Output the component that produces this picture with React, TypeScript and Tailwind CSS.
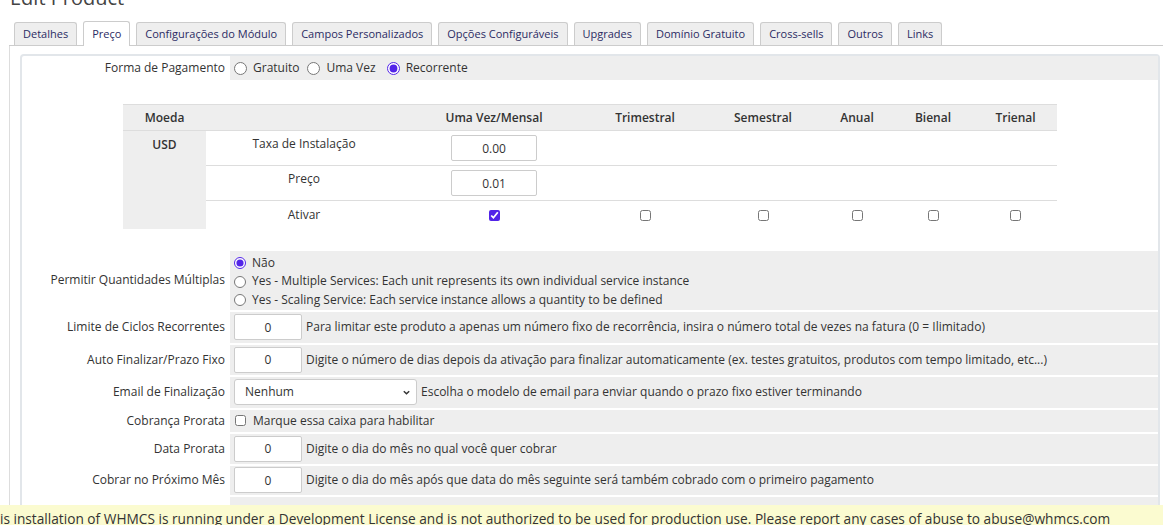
const tabs = [
  "Detalhes",
  "Preço",
  "Configurações do Módulo",
  "Campos Personalizados",
  "Opções Configuráveis",
  "Upgrades",
  "Domínio Gratuito",
  "Cross-sells",
  "Outros",
  "Links",
];

const cycles = ["Trimestral", "Semestral", "Anual", "Bienal", "Trienal"];

function NumInput({ value, w = "w-[68px]" }: { value: string; w?: string }) {
  return (
    <input
      readOnly
      value={value}
      className={`${w} h-[26px] rounded-[2px] border border-[#ccc] bg-white text-center text-[12px] text-[#333] outline-none`}
    />
  );
}

function Row({ label, h, children, top }: { label: string; h: string; children: React.ReactNode; top?: boolean }) {
  return (
    <div className={`grid grid-cols-[206px_1fr] gap-x-[2px] ${h}`}>
      <div className="flex items-center justify-end pr-[3px] text-[#333]">{label}</div>
      <div className={`flex bg-[#eee] px-[4px] ${top ? "flex-col justify-center" : "items-center"}`}>{children}</div>
    </div>
  );
}

export default function App() {
  return (
    <div className="relative h-[525px] w-[1163px] overflow-hidden bg-white text-[12px] text-[#333] [font-family:'Open_Sans',sans-serif]">
      <h1 className="-mt-[14px] pl-[10px] text-[20px] leading-[24px] text-[#444]">Edit Product</h1>

      <div className="ml-[9px] mt-[11px] flex gap-[6px] border-b border-[#ccc] pl-[5px] text-[11px]">
        {tabs.map((t) =>
          t === "Preço" ? (
            <div
              key={t}
              className="-mb-px flex h-[25px] items-center rounded-t-[3px] border border-b-0 border-[#ccc] bg-white px-[8px] text-[#2b2b63]"
            >
              {t}
            </div>
          ) : (
            <div
              key={t}
              className="mt-[1px] flex h-[23px] items-center rounded-t-[3px] border border-b-0 border-[#ccc] bg-[#eee] px-[8px] text-[#2b2b63]"
            >
              {t}
            </div>
          )
        )}
      </div>

      <div className="ml-[9px] w-[1170px] border-l border-[#ddd] pl-[10px] pt-[8px]">
        <div className="w-[1140px] rounded-t-[4px] border-2 border-b-0 border-[#e2e6ea]">
          <Row label="Forma de Pagamento" h="h-[24px]">
            <label className="flex items-center gap-[6px]">
              <input type="radio" name="pay" readOnly className="m-0 h-[13px] w-[13px] accent-[#5224e8]" />
              Gratuito
            </label>
            <label className="ml-[8px] flex items-center gap-[6px]">
              <input type="radio" name="pay" readOnly className="m-0 h-[13px] w-[13px] accent-[#5224e8]" />
              Uma Vez
            </label>
            <label className="ml-[11px] flex items-center gap-[6px]">
              <input type="radio" name="pay" defaultChecked className="m-0 h-[13px] w-[13px] accent-[#5224e8]" />
              Recorrente
            </label>
          </Row>

          <div className="flex justify-center pb-[22px] pt-[24px]">
            <table className="w-[934px] border-collapse border-t border-[#ddd] text-[12px]">
              <thead>
                <tr className="h-[26px] border-b border-[#ddd] bg-[#eee] font-semibold text-[#333]">
                  <th className="w-[83px] font-semibold">Moeda</th>
                  <th className="w-[196px]"></th>
                  <th className="w-[184px] font-semibold">Uma Vez/Mensal</th>
                  <th className="w-[118px] font-semibold">Trimestral</th>
                  <th className="w-[118px] font-semibold">Semestral</th>
                  <th className="w-[70px] font-semibold">Anual</th>
                  <th className="w-[82px] font-semibold">Bienal</th>
                  <th className="w-[83px] font-semibold">Trienal</th>
                </tr>
              </thead>
              <tbody>
                <tr className="h-[35px] border-b border-[#ddd]">
                  <td rowSpan={3} className="bg-[#eee] pt-[5px] text-center align-top font-semibold">
                    USD
                  </td>
                  <td className="pb-[8px] text-center">Taxa de Instalação</td>
                  <td className="text-center">
                    <NumInput value="0.00" w="w-[86px]" />
                  </td>
                  <td colSpan={5}></td>
                </tr>
                <tr className="h-[35px] border-b border-[#ddd]">
                  <td className="pb-[8px] text-center">Preço</td>
                  <td className="text-center">
                    <NumInput value="0.01" w="w-[86px]" />
                  </td>
                  <td colSpan={5}></td>
                </tr>
                <tr className="h-[28px]">
                  <td className="text-center">Ativar</td>
                  <td className="text-center">
                    <input type="checkbox" defaultChecked className="m-0 h-[11px] w-[11px] align-middle accent-[#5224e8]" />
                  </td>
                  {cycles.map((c) => (
                    <td key={c} className="text-center">
                      <input type="checkbox" readOnly className="m-0 h-[11px] w-[11px] align-middle accent-[#5224e8]" />
                    </td>
                  ))}
                </tr>
              </tbody>
            </table>
          </div>

          <div className="flex flex-col gap-[2px]">
            <Row label="Permitir Quantidades Múltiplas" h="h-[59px]" top>
              <div className="flex w-full flex-col pt-[3px] leading-[18.5px]">
                <label className="flex items-center gap-[6px]">
                  <input type="radio" name="qty" defaultChecked className="m-0 h-[12px] w-[12px] accent-[#5224e8]" />
                  Não
                </label>
                <label className="flex items-center gap-[6px]">
                  <input type="radio" name="qty" readOnly className="m-0 h-[12px] w-[12px] accent-[#5224e8]" />
                  Yes - Multiple Services: Each unit represents its own individual service instance
                </label>
                <label className="flex items-center gap-[6px]">
                  <input type="radio" name="qty" readOnly className="m-0 h-[12px] w-[12px] accent-[#5224e8]" />
                  Yes - Scaling Service: Each service instance allows a quantity to be defined
                </label>
              </div>
            </Row>
            <Row label="Limite de Ciclos Recorrentes" h="h-[31px]">
              <NumInput value="0" />
              <span className="ml-[4px]">
                Para limitar este produto a apenas um número fixo de recorrência, insira o número total de vezes na fatura (0 = Ilimitado)
              </span>
            </Row>
            <Row label="Auto Finalizar/Prazo Fixo" h="h-[30px]">
              <NumInput value="0" />
              <span className="ml-[4px]">
                Digite o número de dias depois da ativação para finalizar automaticamente (ex. testes gratuitos, produtos com tempo limitado, etc...)
              </span>
            </Row>
            <Row label="Email de Finalização" h="h-[31px]">
              <div className="flex h-[26px] w-[183px] items-center justify-between rounded-[3px] border border-[#ccc] bg-white pl-[10px] pr-[5px]">
                <span>Nenhum</span>
                <svg width="9" height="9" viewBox="0 0 10 10" className="text-[#333]">
                  <path d="M2 3.5 L5 6.5 L8 3.5" fill="none" stroke="currentColor" strokeWidth="1.6" />
                </svg>
              </div>
              <span className="ml-[4px]">Escolha o modelo de email para enviar quando o prazo fixo estiver terminando</span>
            </Row>
            <Row label="Cobrança Prorata" h="h-[22px]">
              <input type="checkbox" readOnly className="m-0 ml-[1px] h-[11px] w-[11px] accent-[#5224e8]" />
              <span className="ml-[7px]">Marque essa caixa para habilitar</span>
            </Row>
            <Row label="Data Prorata" h="h-[30px]">
              <NumInput value="0" />
              <span className="ml-[4px]">Digite o dia do mês no qual você quer cobrar</span>
            </Row>
            <Row label="Cobrar no Próximo Mês" h="h-[29px]">
              <NumInput value="0" />
              <span className="ml-[4px]">Digite o dia do mês após que data do mês seguinte será também cobrado com o primeiro pagamento</span>
            </Row>
            <Row label="" h="h-[30px]">
              <input type="radio" defaultChecked className="m-0 h-[12px] w-[12px] accent-[#5224e8]" />
              <span className="ml-[6px]">Usar configuração padrão do sistema</span>
            </Row>
          </div>
        </div>
      </div>

      <div className="fixed bottom-0 left-0 right-0 h-[20px] overflow-hidden bg-[#fbfbd0]">
        <div className="-ml-[16px] whitespace-nowrap pt-[3px] text-[13.7px] leading-[22px] text-[#333]">
          This installation of WHMCS is running under a Development License and is not authorized to be used for production use. Please report any cases of abuse to abuse@whmcs.com
        </div>
      </div>
    </div>
  );
}
